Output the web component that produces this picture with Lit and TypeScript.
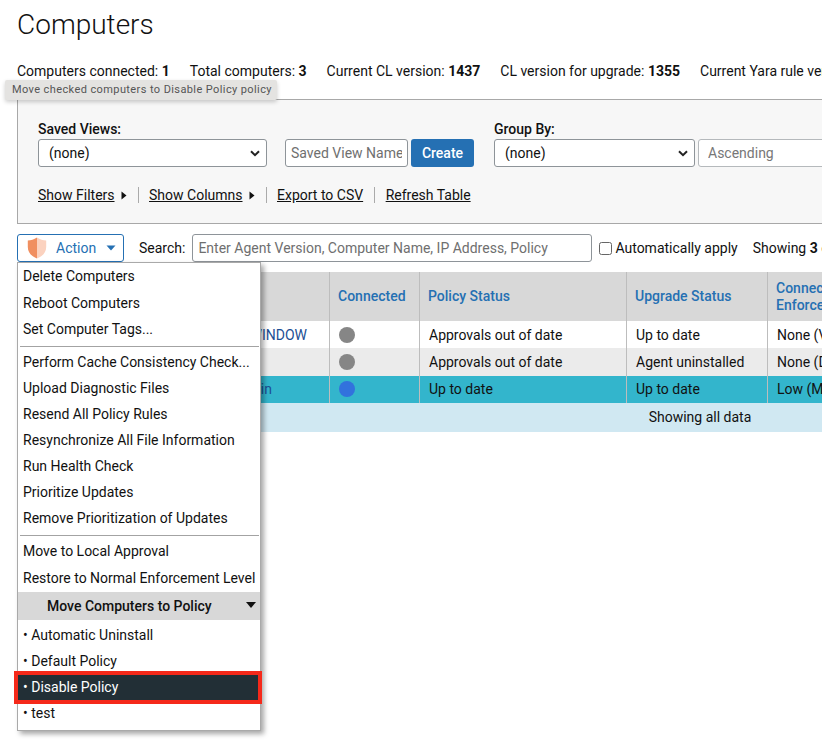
import { LitElement, html, css } from "lit";
import { customElement } from "lit/decorators.js";

const chevron = html`<svg class="chev" width="10" height="7" viewBox="0 0 10 7"><path d="M1 1.2 5 5.2 9 1.2" fill="none" stroke="#222" stroke-width="2"/></svg>`;
const tri = html`<svg class="tri" width="6" height="9" viewBox="0 0 6 9"><path d="M0.5 0.5 5.5 4.5 0.5 8.5Z" fill="#111"/></svg>`;

@customElement("app-root")
export class AppRoot extends LitElement {
  static styles = css`
    :host { display: block; position: relative; width: 822px; height: 742px; overflow: hidden; background: #fff; font-family: Roboto, "Liberation Sans", sans-serif; font-size: 14px; color: #111; }
    * { box-sizing: border-box; }
    .page { width: 1300px; padding: 0 0 0 17px; }
    h1 { margin: 0; padding-top: 8px; height: 62px; font-size: 28px; line-height: 34px; font-weight: 300; color: #111; }
    .stats { display: flex; gap: 20px; height: 37px; line-height: 18px; white-space: nowrap; }
    .stats span { display: block; }
    .panel { width: 1100px; height: 125px; border: 1px solid #a8a8a8; background: #f7f7f7; padding: 20px; }
    .forms { display: flex; align-items: flex-end; }
    label { display: block; font-weight: 500; line-height: 18px; height: 19px; }
    .sel { position: relative; display: block; height: 28px; }
    select, input.fld { font: inherit; height: 28px; border: 1px solid #8e9499; border-radius: 3px; background: #fff; color: #111; padding: 0 10px; appearance: none; display: block; }
    select { width: 100%; }
    input.fld::placeholder { color: #6f6f6f; opacity: 1; }
    .chev { position: absolute; right: 7px; top: 11px; pointer-events: none; }
    .v1 { width: 229px; margin-right: 18px; }
    input.name { width: 123px; margin-right: 3px; padding: 0 5px; }
    .create { width: 63px; height: 28px; margin-right: 20px; border: 0; border-radius: 3px; background: #2570b3; color: #fff; font: 500 14px Roboto, sans-serif; padding: 0; }
    .v2 { width: 201px; margin-right: 3px; }
    .asc { width: 300px; }
    select.asc { color: #777; border-color: #b5b9bc; padding: 0 9px; }
    .links { display: flex; align-items: center; margin-top: 18px; height: 20px; }
    .links a { color: #111; text-decoration: underline; }
    .tri { margin-left: 6px; }
    .links i { display: block; width: 1px; height: 16px; background: #aaa; margin: 0 10.5px 0 11px; }
    .bar { display: flex; align-items: center; height: 28px; margin-top: 10px; white-space: nowrap; }
    .action { display: flex; align-items: center; width: 107px; height: 28px; border: 1px solid #2570b3; border-radius: 3px; background: #fff; color: #2570b3; padding: 0 0 0 9px; font: 14px Roboto, sans-serif; }
    .action .shield { margin-right: 9px; }
    .action .caret { margin-left: 10px; }
    .search { margin-left: 15px; margin-right: 7px; }
    input.q { width: 400px; padding: 0 5px; }
    .auto { display: flex; align-items: center; margin-left: 7px; margin-right: 15px; }
    .box { display: block; width: 13px; height: 13px; border: 1px solid #666; border-radius: 2.5px; background: #fff; margin-right: 3px; }
    .grid { margin-top: 10px; width: 1200px; }
    .row { display: grid; grid-template-columns: 313px 90px 207px 141px 1fr; }
    .row > div { border-right: 1px solid #bdbdbd; padding: 0 9px; display: flex; align-items: center; white-space: nowrap; overflow: hidden; }
    .row > div:last-child { border-right: 0; }
    .head { height: 49px; background: #d8d8d8; color: #2570b3; font-weight: 500; }
    .row.head > div { line-height: 17px; padding-left: 8px; }
    .r1 { height: 27px; background: #fff; }
    .r2 { height: 28px; background: #ebebeb; }
    .r3 { height: 27px; background: #33b5cc; }
    .row.r3 > div { padding-bottom: 1px; }
    .nm { justify-content: flex-end; color: #1c4f94; }
    .row.r1 .nm { padding-right: 22px; }
    .row.r3 .nm { padding-right: 57px; }
    .dot { width: 16px; height: 16px; border-radius: 50%; background: #868686; }
    .r3 .dot { background: #3272dd; }
    .foot { height: 29px; background: #d0e8f2; line-height: 28px; text-align: center; }
    .foot span { display: block; width: 1366px; }
    .menu { position: absolute; left: 17px; top: 262px; width: 244px; height: 469px; background: #fff; border: 1px solid #a9a9a9; box-shadow: 3px 3px 5px rgba(0,0,0,.35); padding-top: 1px; white-space: nowrap; }
    .it { height: 26px; line-height: 25px; padding-left: 5px; }
    .tall { height: 27px; line-height: 26px; }
    hr { margin: 3px 1px 3px 2px; height: 1px; border: 0; background: #a3a3a3; }
    .mh { height: 28px; line-height: 28px; background: #d8d8d8; font-weight: 500; padding-left: 29px; position: relative; margin-bottom: 3px; }
    .mh svg { position: absolute; right: 4px; top: 10px; }
    .sel-it { background: #222f36; color: #fff; outline: 4px solid #f5291a; position: relative; margin-right: 2px; height: 25px; margin-bottom: 1px; }
    .tip { position: absolute; left: 5px; top: 80px; height: 20px; width: 272px; background: #e4e3e1; color: #555; font-size: 11px; line-height: 19px; padding-left: 7px; letter-spacing: 0.4px; border-radius: 2px; box-shadow: 0 2px 4px rgba(0,0,0,.2); white-space: nowrap; }
  `;

  render() {
    const items = (l: string[]) => l.map((t) => html`<div class="it">${t}</div>`);
    return html`
      <div class="page">
        <h1>Computers</h1>
        <div class="stats">
          <span>Computers connected: <b>1</b></span>
          <span>Total computers: <b>3</b></span>
          <span>Current CL version: <b>1437</b></span>
          <span>CL version for upgrade: <b>1355</b></span>
          <span>Current Yara rule version: <b>1</b></span>
        </div>
        <div class="panel">
          <div class="forms">
            <div class="v1"><label>Saved Views:</label><div class="sel"><select><option>(none)</option></select>${chevron}</div></div>
            <input class="fld name" type="text" placeholder="Saved View Name" />
            <button class="create">Create</button>
            <div class="v2"><label>Group By:</label><div class="sel"><select><option>(none)</option></select>${chevron}</div></div>
            <div class="asc"><div class="sel"><select class="asc"><option>Ascending</option></select></div></div>
          </div>
          <div class="links">
            <a>Show Filters</a>${tri}<i></i>
            <a>Show Columns</a>${tri}<i></i>
            <a>Export to CSV</a><i></i>
            <a>Refresh Table</a>
          </div>
        </div>
        <div class="bar">
          <button class="action">
            <svg class="shield" width="20" height="22" viewBox="0 0 20 22"><path d="M10 0.5C7 2.6 3.8 3.4 0.8 3.6V10c0 5.5 3.6 9.3 9.2 11.5Z" fill="#f08f60"/><path d="M10 0.5C13 2.6 16.2 3.4 19.2 3.6V10c0 5.5-3.6 9.3-9.2 11.5Z" fill="#fbd2bf"/></svg>
            Action
            <svg class="caret" width="10" height="6" viewBox="0 0 10 6"><path d="M0.5 0.5H9.5L5 5.5Z" fill="#2570b3"/></svg>
          </button>
          <span class="search">Search:</span>
          <input class="fld q" type="text" placeholder="Enter Agent Version, Computer Name, IP Address, Policy" />
          <span class="auto"><span class="box"></span>Automatically apply</span>
          <span>Showing <b>3</b> of <b>3</b></span>
        </div>
        <div class="grid">
          <div class="row head"><div></div><div>Connected</div><div>Policy Status</div><div>Upgrade Status</div><div>Connector<br />Enforcement Level</div></div>
          <div class="row r1"><div class="nm">WINDOW</div><div><span class="dot"></span></div><div>Approvals out of date</div><div>Up to date</div><div>None (Visibility)</div></div>
          <div class="row r2"><div class="nm"></div><div><span class="dot"></span></div><div>Approvals out of date</div><div>Agent uninstalled</div><div>None (Disabled)</div></div>
          <div class="row r3"><div class="nm">admin</div><div><span class="dot"></span></div><div>Up to date</div><div>Up to date</div><div>Low (Monitor)</div></div>
          <div class="foot"><span>Showing all data</span></div>
        </div>
      </div>
      <div class="tip">Move checked computers to Disable Policy policy</div>
      <div class="menu">
        <div class="it">Delete Computers</div>
        <div class="it tall">Reboot Computers</div>
        <div class="it">Set Computer Tags...</div>
        <hr />
        ${items(["Perform Cache Consistency Check...", "Upload Diagnostic Files", "Resend All Policy Rules", "Resynchronize All File Information", "Run Health Check", "Prioritize Updates", "Remove Prioritization of Updates"])}
        <hr />
        <div class="it">Move to Local Approval</div>
        <div class="it tall">Restore to Normal Enforcement Level</div>
        <div class="mh">Move Computers to Policy<svg width="10" height="6" viewBox="0 0 10 6"><path d="M0 0H10L5 6Z" fill="#111"/></svg></div>
        <div class="it">• Automatic Uninstall</div>
        <div class="it">• Default Policy</div>
        <div class="it sel-it">• Disable Policy</div>
        <div class="it">• test</div>
      </div>
    `;
  }
}
